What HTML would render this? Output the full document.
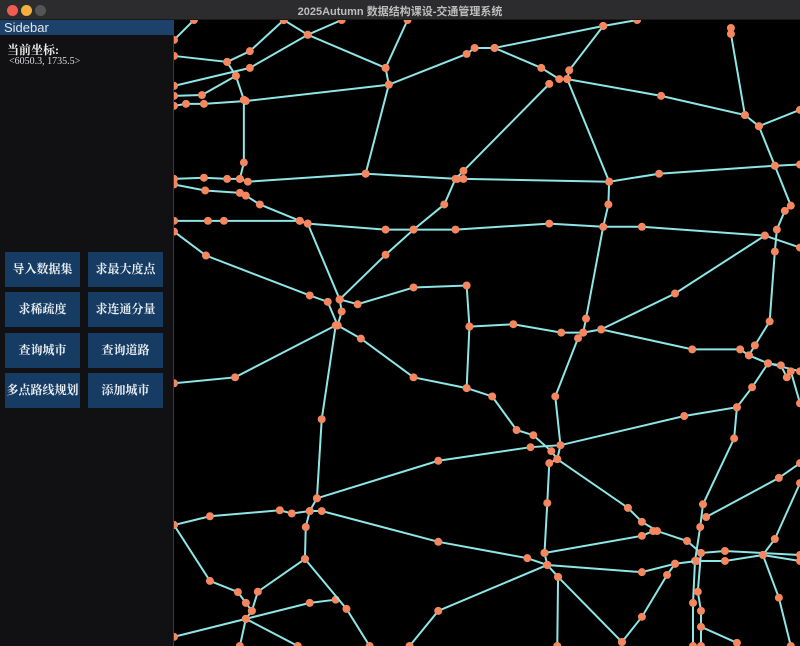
<!DOCTYPE html>
<html><head><meta charset="utf-8"><style>
*{margin:0;padding:0;box-sizing:border-box}
body{width:800px;height:646px;background:#000;overflow:hidden;position:relative;font-family:"Liberation Serif","Noto Serif CJK SC",serif}
#tb{position:absolute;left:0;top:0;width:800px;height:20px;background:#2c2c2e;border-bottom:1px solid #1a1a1a}
#tb .t{position:absolute;left:0;width:800px;top:3px;text-align:center;color:#bdbdbd;font:bold 11px "Liberation Sans","Noto Sans CJK SC",sans-serif}
.d{position:absolute;top:5px;width:11px;height:11px;border-radius:50%}
#sb{position:absolute;left:0;top:20px;width:174px;height:626px;background:#111113;border-right:1px solid #3a3a3c}
#hd{position:absolute;left:0;top:0;width:174px;height:15px;background:#1c416b;color:#dfe6ee;font:13px "Liberation Sans",sans-serif;padding-left:4px;line-height:15px}
.l1{position:absolute;left:7px;top:21px;color:#eee;font-size:12px;font-weight:bold}
.l2{position:absolute;left:9px;top:36px;color:#ddd;font-size:10px}
.b{position:absolute;width:75px;height:35px;background:#163c63;color:#e8edf3;font-size:12px;font-weight:bold;text-align:center;line-height:35px}
#map{position:absolute;left:174px;top:20px}
</style></head><body>
<div id="tb"><div class="d" style="left:7px;background:#ee5d50"></div><div class="d" style="left:21px;background:#f4b03c"></div><div class="d" style="left:35px;background:#555"></div><div class="t">2025Autumn 数据结构课设-交通管理系统</div></div>
<div id="sb"><div id="hd">Sidebar</div><div class="l1">当前坐标:</div><div class="l2">&lt;6050.3, 1735.5&gt;</div>
<div class="b" style="left:5px;top:232px">导入数据集</div><div class="b" style="left:88px;top:232px">求最大度点</div>
<div class="b" style="left:5px;top:272px">求稀疏度</div><div class="b" style="left:88px;top:272px">求连通分量</div>
<div class="b" style="left:5px;top:313px">查询城市</div><div class="b" style="left:88px;top:313px">查询道路</div>
<div class="b" style="left:5px;top:353px">多点路线规划</div><div class="b" style="left:88px;top:353px">添加城市</div>
</div>
<svg id="map" width="626" height="626" viewBox="0 0 1568 1568">
<defs><marker id="m" markerUnits="userSpaceOnUse" markerWidth="24" markerHeight="24" refX="12" refY="12"><circle cx="12" cy="12" r="10" fill="#f4875f"/></marker></defs>
<g fill="none" stroke="#8ee6e6" stroke-width="5" marker-start="url(#m)" marker-mid="url(#m)" marker-end="url(#m)">
<polyline points="0,90 133,105 155,140 175,200"/>
<polyline points="133,105 190,78 275,0"/>
<polyline points="0,50 50,0"/>
<polyline points="0,165 190,120 335,37 420,0"/>
<polyline points="275,0 335,37 530,120 585,0"/>
<polyline points="0,215 30,210 75,210 180,203 538,162 733,85 753,70 803,70 920,120 965,148 985,148 1220,190 1430,238 1465,266 1568,225"/>
<polyline points="530,120 538,162 480,385"/>
<polyline points="803,70 1075,15 1160,0"/>
<polyline points="1075,15 990,126 985,148"/>
<polyline points="1395,20 1395,35 1430,238"/>
<polyline points="0,190 70,188 155,140"/>
<polyline points="175,200 175,357 165,398"/>
<polyline points="0,398 75,395 133,398 165,398 185,405 480,385 710,398 725,398 1090,405 1215,385 1505,365 1568,362"/>
<polyline points="0,412 78,427 165,433 180,440 215,462 315,503 335,510 530,525 600,525 705,525 940,510 1075,518 1172,518 1480,540 1568,570"/>
<polyline points="0,503 85,503 125,503 315,503"/>
<polyline points="940,160 725,378 705,398 677,462 600,525 530,588 415,700"/>
<polyline points="985,148 1090,405 1088,462 1075,518 1032,748 1025,783"/>
<polyline points="1465,266 1505,365 1545,465 1530,478 1510,525 1505,580 1492,755 1455,815 1440,840"/>
<polyline points="0,530 80,590 340,690 385,706 410,765 468,798 600,895 733,922 797,943 858,1027 900,1040 945,1080 960,1100"/>
<polyline points="335,510 415,700 420,730 410,765"/>
<polyline points="415,700 460,712 600,670 733,665 740,768 733,922"/>
<polyline points="740,768 850,762 970,783 1025,783 1070,775 1298,825 1418,825 1440,840 1488,860 1568,880"/>
<polyline points="1070,775 1255,685 1480,540"/>
<polyline points="0,910 153,895 405,765 370,1000 358,1198 340,1230"/>
<polyline points="1025,783 1012,797 955,943 968,1065 960,1100 940,1110 935,1210 928,1335 935,1365 962,1395 960,1568"/>
<polyline points="358,1198 662,1104 893,1070 968,1065 1278,992 1410,970 1448,920 1488,860"/>
<polyline points="1410,970 1403,1048 1325,1213 1318,1270 1305,1355 1300,1460 1300,1568"/>
<polyline points="0,1265 90,1243 265,1228 295,1236 340,1230 370,1230 662,1307 885,1348 935,1365 1172,1383 1255,1362 1310,1355 1380,1355 1475,1340 1568,1355"/>
<polyline points="960,1100 1137,1222 1172,1257 1210,1280 1285,1305 1320,1335 1380,1330 1568,1340"/>
<polyline points="928,1335 1172,1292 1200,1280"/>
<polyline points="340,1230 330,1270 328,1350 210,1432 195,1480 180,1500 165,1568"/>
<polyline points="0,1265 90,1405 160,1433 180,1460 195,1480"/>
<polyline points="180,1500 0,1545"/>
<polyline points="180,1500 340,1460 405,1452"/>
<polyline points="328,1350 432,1475 490,1568"/>
<polyline points="180,1500 310,1568"/>
<polyline points="935,1365 662,1480 590,1568"/>
<polyline points="962,1395 1122,1558"/>
<polyline points="1255,1362 1235,1390 1172,1495 1122,1558"/>
<polyline points="1568,1110 1515,1147 1333,1245"/>
<polyline points="1568,1160 1505,1300 1475,1340 1515,1447 1545,1568"/>
<polyline points="1320,1335 1312,1432 1320,1480 1320,1568"/>
<polyline points="1320,1520 1410,1560"/>
<polyline points="1545,880 1568,960"/>
<polyline points="1488,860 1520,865 1535,895"/>
</g>
</svg>
</body></html>
